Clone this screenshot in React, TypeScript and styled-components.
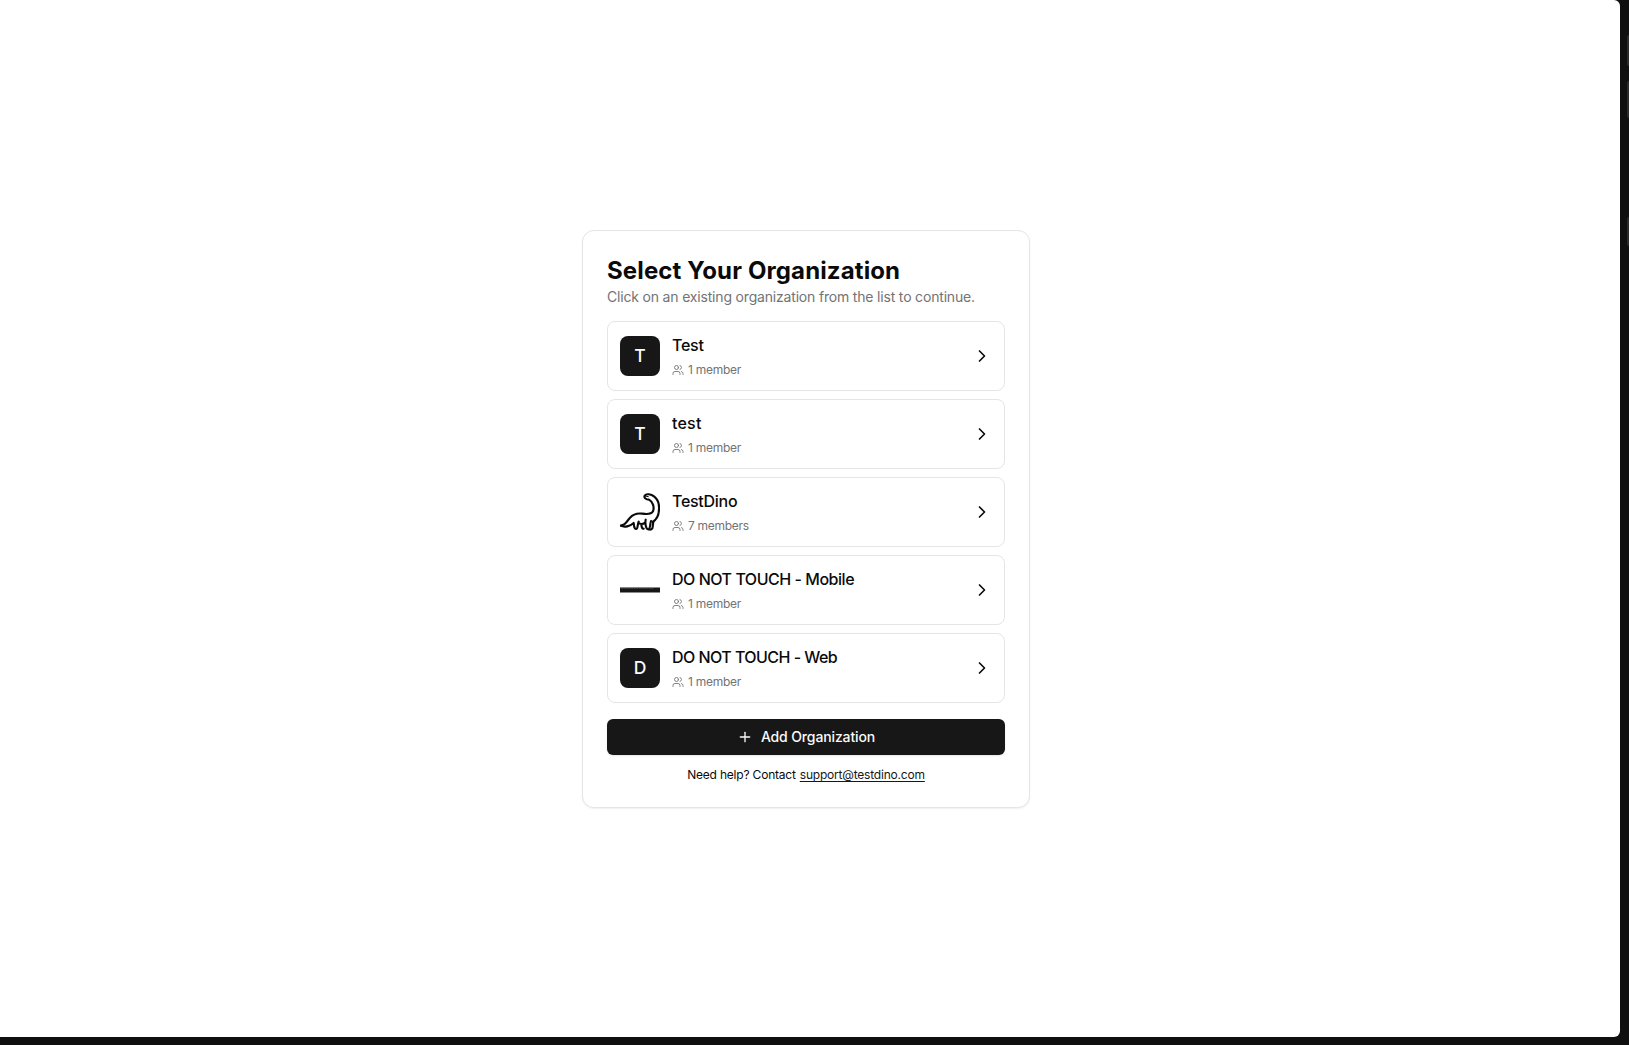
import React from 'react';
import styled, { createGlobalStyle } from 'styled-components';
import { ChevronRight, Plus, Users } from 'lucide-react';

const GlobalStyle = createGlobalStyle`
  *, *::before, *::after { box-sizing: border-box; }
  body {
    margin: 0;
    background: #0f0f0f;
    color: #0a0a0a;
    font-family: Inter, "Liberation Sans", sans-serif;
  }
  h1, h2, p { margin: 0; }
`;

const Frame = styled.div`
  display: grid;
  grid-template-columns: 1fr 9px;
  height: 1045px;
  padding-bottom: 8px;
  overflow: hidden;
`;

const Page = styled.main`
  display: flex;
  align-items: center;
  justify-content: center;
  padding: 1px 8px 0 0;
  background: #fff;
  border-radius: 0 6px 6px 0;
`;

const Rail = styled.aside`
  display: flex;
  flex-direction: column;
  align-items: flex-end;
  padding-top: 35px;
`;

const RailButton = styled.div<{ $height: number; $gap: number }>`
  width: 2px;
  height: ${(p) => p.$height}px;
  margin-bottom: ${(p) => p.$gap}px;
  background: #2b2b29;
  border-radius: 2px 0 0 2px;
`;

const Card = styled.section`
  display: flex;
  flex-direction: column;
  width: 448px;
  height: 578px;
  padding: 24px;
  background: #fff;
  border: 1px solid #e5e5e5;
  border-radius: 12px;
  box-shadow: 0 1px 2px rgba(0, 0, 0, 0.06);
`;

const Title = styled.h1`
  font-size: 24px;
  font-weight: 700;
  line-height: 32px;
  letter-spacing: 0.12px;
`;

const Subtitle = styled.p`
  color: #737373;
  font-size: 14px;
  line-height: 20px;
  letter-spacing: -0.18px;
  white-space: nowrap;
`;

const List = styled.div`
  display: flex;
  flex-direction: column;
  gap: 8px;
  margin: 14px 0 16px;
`;

const Row = styled.button`
  display: flex;
  align-items: center;
  gap: 12px;
  height: 70px;
  padding: 0 12px;
  background: #fff;
  border: 1px solid #e5e5e5;
  border-radius: 8px;
  color: inherit;
  font: inherit;
  text-align: left;
`;

const Avatar = styled.div<{ $filled: boolean }>`
  display: flex;
  align-items: center;
  justify-content: center;
  flex: none;
  width: 40px;
  height: 40px;
  border-radius: 8px;
  background: ${(p) => (p.$filled ? '#171717' : 'transparent')};
  color: #fafafa;
  font-size: 17.5px;
  font-weight: 500;
  line-height: 28px;
`;

const Details = styled.div`
  display: flex;
  flex: 1;
  flex-direction: column;
  gap: 4px;
`;

const Name = styled.h2<{ $tracking: number }>`
  padding-bottom: 2px;
  font-size: 16px;
  font-weight: 500;
  line-height: 22px;
  letter-spacing: ${(p) => p.$tracking}px;
`;

const Members = styled.div`
  display: flex;
  align-items: center;
  gap: 4px;
  color: #737373;
  font-size: 12px;
  line-height: 16px;
  letter-spacing: -0.28px;
`;

const AddButton = styled.button`
  display: flex;
  align-items: center;
  justify-content: center;
  gap: 8px;
  height: 36px;
  padding: 0 16px;
  background: #171717;
  border: 0;
  border-radius: 6px;
  box-shadow: 0 1px 2px rgba(0, 0, 0, 0.1);
  color: #fafafa;
  font: 500 14px/20px Inter, "Liberation Sans", sans-serif;
  letter-spacing: -0.13px;
`;

const Help = styled.p`
  display: flex;
  justify-content: center;
  gap: 4px;
  margin-top: 12px;
  font-size: 12px;
  line-height: 16px;
  letter-spacing: -0.2px;
`;

const HelpLink = styled.a`
  color: #171717;
  text-decoration: underline;
  text-decoration-skip-ink: none;
  text-underline-offset: 2px;
`;

function DinoLogo() {
  return (
    <svg width="40" height="40" viewBox="45 66 120 120" fill="none" stroke="#0a0a0a" strokeWidth="6.4" strokeLinecap="round" strokeLinejoin="round">
      <path d="M48 167C64 165 66 152 75 143C84 133 98 129 112 131C125 133 139 133 144 124C149 111 143 95 132 89C124 89 116 84 119 77C123 70 138 72 148 80C160 90 163 104 162 117C162 134 156 148 143 156" />
      <path d="M48 167C58 173 75 169 86 159C87 168 88 178 94 177C99 176 97 164 101 155M101 160C108 163 116 162 121 158M109 164C110 173 112 177 116 176M122 149C120 158 122 178 130 178C136 178 135 162 138 153M131 178C137 180 143 178 143 171L145 155" />
      <path d="M121 78L130 80" strokeWidth="3" />
    </svg>
  );
}

function BannerLogo() {
  return (
    <svg width="40" height="40" viewBox="0 0 40 40">
      <rect y="17.5" width="40" height="5" fill="#171717" />
      <path d="M1 18.3H18M19 18.3H34" stroke="#666" strokeWidth="0.6" strokeDasharray="2 .5" />
    </svg>
  );
}

type Org = { name: string; members: string; tracking: number; logo: React.ReactNode; filled: boolean };

const orgs: Org[] = [
  { name: 'Test', members: '1 member', tracking: -0.25, logo: 'T', filled: true },
  { name: 'test', members: '1 member', tracking: 0.2, logo: 'T', filled: true },
  { name: 'TestDino', members: '7 members', tracking: -0.28, logo: <DinoLogo />, filled: false },
  { name: 'DO NOT TOUCH - Mobile', members: '1 member', tracking: -0.47, logo: <BannerLogo />, filled: false },
  { name: 'DO NOT TOUCH - Web', members: '1 member', tracking: -0.54, logo: 'D', filled: true },
];

export default function App() {
  return (
    <>
      <GlobalStyle />
      <Frame>
        <Page>
          <Card>
            <Title>Select Your Organization</Title>
            <Subtitle>Click on an existing organization from the list to continue.</Subtitle>
            <List>
              {orgs.map((org) => (
                <Row key={org.name}>
                  <Avatar $filled={org.filled}>{org.logo}</Avatar>
                  <Details>
                    <Name $tracking={org.tracking}>{org.name}</Name>
                    <Members>
                      <Users size={12} strokeWidth={1.8} />
                      <span>{org.members}</span>
                    </Members>
                  </Details>
                  <ChevronRight size={20} />
                </Row>
              ))}
            </List>
            <AddButton>
              <Plus size={16} />
              Add Organization
            </AddButton>
            <Help>
              <span>Need help? Contact</span>
              <HelpLink>support@testdino.com</HelpLink>
            </Help>
          </Card>
        </Page>
        <Rail>
          <RailButton $height={31} $gap={15} />
          <RailButton $height={37} $gap={99} />
          <RailButton $height={29} $gap={0} />
        </Rail>
      </Frame>
    </>
  );
}
